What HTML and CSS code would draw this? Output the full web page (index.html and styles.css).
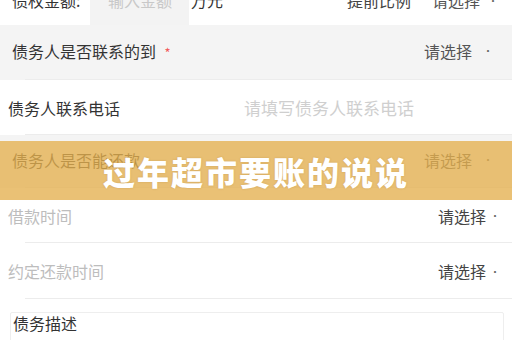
FILE: index.html
```html
<!DOCTYPE html>
<html lang="zh-CN">
<head>
  <meta charset="UTF-8" />
  <meta name="viewport" content="width=device-width, initial-scale=1.0" />
  <title>过年超市要账的说说</title>
  <link rel="stylesheet" href="styles.css">
</head>
<body>
  <div class="form">
    <div class="row top">
      <div class="amount">
        <span class="label">债权金额:</span>
        <span class="input">输入金额</span>
        <span class="unit">万元</span>
      </div>
      <div class="pick">
        <span class="ratio">提前比例</span>
        <span class="choose">请选择</span>
        <span class="dot">•</span>
      </div>
    </div>

    <div class="row gray lined">
      <span class="label">债务人是否联系的到 <span class="star">*</span></span>
      <div class="pick"><span class="choose">请选择</span><span class="dot">•</span></div>
    </div>

    <div class="row white lined">
      <span class="label">债务人联系电话</span>
      <span class="placeholder">请填写债务人联系电话</span>
    </div>

    <div class="row gray lined short">
      <span class="label">债务人是否能还款</span>
      <div class="pick"><span class="choose">请选择</span><span class="dot">•</span></div>
    </div>

    <div class="row white lined off">
      <span class="label">借款时间</span>
      <div class="pick"><span class="choose">请选择</span><span class="dot">•</span></div>
    </div>

    <div class="row white lined off tall">
      <span class="label">约定还款时间</span>
      <div class="pick"><span class="choose">请选择</span><span class="dot">•</span></div>
    </div>

    <div class="desc">债务描述</div>
  </div>

  <div class="banner">过年超市要账的说说</div>
</body>
</html>
```

FILE: styles.css
```css
* {
  margin: 0;
  padding: 0;
  box-sizing: border-box;
}

body {
  width: 512px;
  height: 340px;
  overflow: hidden;
  background: #fff;
  color: #333;
  font-family: "Noto Sans CJK SC", "Noto Sans", sans-serif;
  font-size: 16px;
  position: relative;
}

.form {
  display: flex;
  flex-direction: column;
  margin-top: -25px;
}

.row {
  height: 55px;
  display: flex;
  align-items: center;
  justify-content: space-between;
  padding: 0 20px 0 8px;
}

.row.short { height: 53px; }
.row.tall { height: 56px; }

.row.gray {
  background-color: #f4f4f4;
  padding-left: 12px;
  padding-right: 19px;
}

.row.gray .label { margin-top: -4px; }

.row.lined {
  background-image: linear-gradient(#ececec, #ececec);
  background-size: calc(100% - 25px) 1px;
  background-position: right bottom;
  background-repeat: no-repeat;
}

.row.top {
  height: 50px;
  padding-left: 12px;
  padding-right: 14px;
}

.amount {
  display: flex;
  align-items: center;
  height: 100%;
}

.amount .label { width: 78px; }

.input {
  background: #f3f3f3;
  height: 100%;
  width: 99px;
  padding-left: 18px;
  display: flex;
  align-items: center;
  color: #c8c8c8;
}

.unit { margin-left: 2px; }

.pick {
  display: flex;
  align-items: center;
}

.row.gray .pick { margin-top: -4px; }

.ratio {
  margin-right: 21px;
  color: #444;
}

.choose { color: #555; }

.dot {
  font-size: 10px;
  margin-left: 11px;
  color: #666;
}

.row.top .dot { margin-left: 8px; }

.star {
  color: #f25b5b;
  font-size: 13px;
  margin-left: 5px;
}

.placeholder {
  color: #cfcfcf;
  font-size: 17px;
  margin-right: 78px;
}

.row.off .label { color: #bdbdbd; }

.row.off .pick { margin-right: -8px; }
.row.off .choose { color: #444; }
.row.off .dot { margin-left: 4px; }

.desc {
  margin: 13px 8px 0 10px;
  height: 40px;
  border: 1px solid #eeeeee;
  border-radius: 2px;
  padding: 0 2px;
  line-height: 20px;
  color: #333;
}

.banner {
  position: absolute;
  left: 0;
  top: 141px;
  width: 100%;
  height: 59px;
  background: rgba(228, 176, 78, 0.78);
  color: #fff;
  font-size: 32px;
  font-weight: 900;
  letter-spacing: 2px;
  display: flex;
  align-items: center;
  justify-content: center;
  text-shadow: 0 0 2px rgba(150, 100, 30, 0.3);
}
```
